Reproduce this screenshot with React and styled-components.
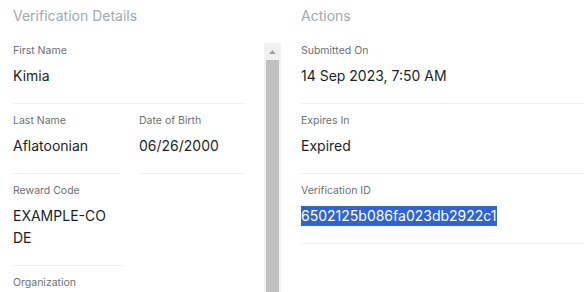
import React from "react";
import styled, { createGlobalStyle } from "styled-components";

const Global = createGlobalStyle`
  html, body { margin: 0; padding: 0; overflow: hidden; background: #fff; }
  body { font-family: Inter, "Noto Sans", sans-serif; width: 584px; height: 292px; }
`;

const Page = styled.div`
  display: grid;
  grid-template-columns: 268px 1fr;
  column-gap: 20px;
  padding: 6px 0 0 13px;
  height: 286px;
  overflow: hidden;
`;

const Column = styled.section`
  display: flex;
  flex-direction: column;
  min-width: 0;
`;

const Heading = styled.h2`
  margin: 0 0 17px;
  font-size: 14px;
  line-height: 20px;
  font-weight: 400;
  color: #a4a8b0;
`;

const ScrollArea = styled.div`
  display: flex;
  gap: 19px;
  height: 420px;
`;

const ScrollContent = styled.div`
  width: 232px;
  flex: none;
  padding-top: 1px;
`;

const Scrollbar = styled.div`
  width: 17px;
  flex: none;
  display: flex;
  flex-direction: column;
  background: #f1f1f1;
`;

const ScrollButton = styled.div`
  height: 17px;
  display: flex;
  align-items: center;
  justify-content: center;
`;

const Thumb = styled.div`
  flex: 1;
  margin: 0 2px;
  background: #c1c1c1;
`;

const Fields = styled.div`
  display: grid;
  grid-template-columns: ${(p) => p.$cols || "1fr"};
  column-gap: 20px;
  row-gap: 10px;
  margin-bottom: 10px;
  padding-top: ${(p) => (p.$offset ? "1px" : "0")};
`;

const Field = styled.div`
  display: flex;
  flex-direction: column;
  gap: 7px;
  padding-bottom: 16px;
  border-bottom: 1px solid #efefef;
`;

const Label = styled.div`
  font-size: 10.5px;
  line-height: 14px;
  color: #6b6f76;
`;

const Value = styled.div`
  font-size: 14px;
  line-height: 22px;
  color: #1b1f2a;
  word-break: break-all;
  max-width: ${(p) => p.$maxWidth || "none"};
`;

const Selected = styled.span`
  background: #3064d4;
  color: #fff;
  line-height: 20px;
  display: inline-block;
`;

function UpArrow() {
  return (
    <svg width="7" height="4" viewBox="0 0 7 4">
      <path d="M3.5 0 L7 4 L0 4 Z" fill="#a3a3a3" />
    </svg>
  );
}

export default function App() {
  return (
    <>
      <Global />
      <Page>
        <Column>
          <Heading>Verification Details</Heading>
          <ScrollArea>
            <ScrollContent>
              <Fields>
                <Field>
                  <Label>First Name</Label>
                  <Value>Kimia</Value>
                </Field>
              </Fields>
              <Fields $cols="1fr 1fr">
                <Field>
                  <Label>Last Name</Label>
                  <Value>Aflatoonian</Value>
                </Field>
                <Field>
                  <Label>Date of Birth</Label>
                  <Value>06/26/2000</Value>
                </Field>
              </Fields>
              <Fields $cols="110px">
                <Field>
                  <Label>Reward Code</Label>
                  <Value $maxWidth="96px">EXAMPLE-CODE</Value>
                </Field>
              </Fields>
              <Fields>
                <Field>
                  <Label>Organization</Label>
                  <Value>Example University</Value>
                </Field>
              </Fields>
            </ScrollContent>
            <Scrollbar>
              <ScrollButton>
                <UpArrow />
              </ScrollButton>
              <Thumb />
            </Scrollbar>
          </ScrollArea>
        </Column>
        <Column>
          <Heading>Actions</Heading>
          <Fields $offset>
            <Field>
              <Label>Submitted On</Label>
              <Value>14 Sep 2023, 7:50 AM</Value>
            </Field>
            <Field>
              <Label>Expires In</Label>
              <Value>Expired</Value>
            </Field>
            <Field>
              <Label>Verification ID</Label>
              <Value>
                <Selected>6502125b086fa023db2922c1</Selected>
              </Value>
            </Field>
          </Fields>
        </Column>
      </Page>
    </>
  );
}
